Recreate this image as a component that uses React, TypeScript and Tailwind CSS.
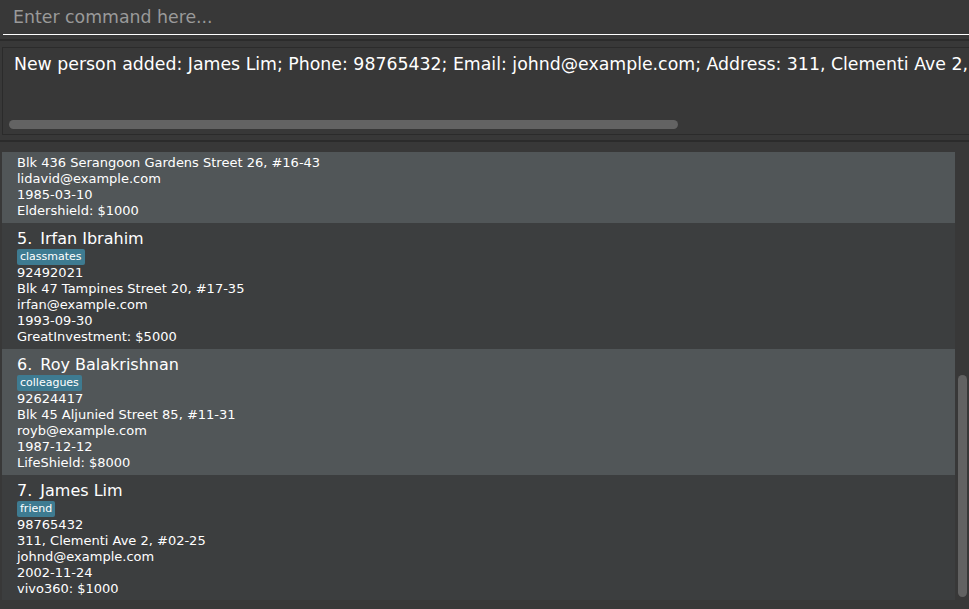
import React from "react";

type Person = {
  id: number;
  name: string;
  tag: string;
  phone: string;
  address: string;
  email: string;
  birthday: string;
  policy: string;
};

const people: Person[] = [
  {
    id: 4,
    name: "David Li",
    tag: "family",
    phone: "91031282",
    address: "Blk 436 Serangoon Gardens Street 26, #16-43",
    email: "lidavid@example.com",
    birthday: "1985-03-10",
    policy: "Eldershield: $1000",
  },
  {
    id: 5,
    name: "Irfan Ibrahim",
    tag: "classmates",
    phone: "92492021",
    address: "Blk 47 Tampines Street 20, #17-35",
    email: "irfan@example.com",
    birthday: "1993-09-30",
    policy: "GreatInvestment: $5000",
  },
  {
    id: 6,
    name: "Roy Balakrishnan",
    tag: "colleagues",
    phone: "92624417",
    address: "Blk 45 Aljunied Street 85, #11-31",
    email: "royb@example.com",
    birthday: "1987-12-12",
    policy: "LifeShield: $8000",
  },
  {
    id: 7,
    name: "James Lim",
    tag: "friend",
    phone: "98765432",
    address: "311, Clementi Ave 2, #02-25",
    email: "johnd@example.com",
    birthday: "2002-11-24",
    policy: "vivo360: $1000",
  },
];

function PersonCard({ person, first }: { person: Person; first?: boolean }) {
  const light = person.id % 2 === 0;
  return (
    <div
      className={`h-[126px] shrink-0 pl-[15px] pt-[6px] pb-[4px] ${light ? "bg-[#515658]" : "bg-[#3c3e3f]"} ${first ? "-mt-[55px]" : ""}`}
    >
      <div className="h-[20px] leading-[20px] text-[16px] whitespace-nowrap flex">
        <span>{person.id}.</span>
        <span className="ml-[8px]">{person.name}</span>
      </div>
      <div className="flex">
        <span className="h-[16px] leading-[16px] px-[3px] rounded-[2px] bg-[#3e7b91] text-[11px]">{person.tag}</span>
      </div>
      <div className="text-[13px] leading-[16px] whitespace-nowrap">
        <div>{person.phone}</div>
        <div>{person.address}</div>
        <div>{person.email}</div>
        <div>{person.birthday}</div>
        <div>{person.policy}</div>
      </div>
    </div>
  );
}

export default function App() {
  return (
    <div className="w-[969px] h-[609px] bg-[#383838] text-white flex flex-col overflow-hidden font-['DejaVu_Sans',sans-serif]">
      {/* command box */}
      <div className="h-[35px] shrink-0 pl-[3px]">
        <div className="h-full border-b border-white flex items-center pt-[2px] pl-[10px] text-[17.33px] text-[#9a9a9a]">
          Enter command here...
        </div>
      </div>
      <div className="h-[4px] shrink-0" />
      <div className="h-[2px] shrink-0 bg-[#2b2b2b]" />

      {/* result display */}
      <div className="pt-[6px] pl-[2px] shrink-0">
        <div className="h-[88px] w-[980px] border border-[#2b2b2b] flex flex-col overflow-hidden">
          <div className="pt-[5px] pl-[11px] h-[22px] leading-[22px] box-content text-[17.33px] whitespace-nowrap">
            New person added: James Lim; Phone: 98765432; Email: johnd@example.com; Address: 311, Clementi Ave 2, #02-25; Birthday: 2002-11-24; Tags: [friend]
          </div>
          <div className="mt-auto mb-[5px] ml-[6px] w-[669px] h-[9px] rounded-full bg-[#636363]" />
        </div>
      </div>
      <div className="h-[5px] shrink-0" />
      <div className="h-[2px] shrink-0 bg-[#2b2b2b]" />
      <div className="h-[10px] shrink-0" />

      {/* person list */}
      <div className="h-[448px] shrink-0 flex pl-[2px]">
        <div className="w-[953px] flex flex-col overflow-hidden">
          {people.map((p, i) => (
            <PersonCard key={p.id} person={p} first={i === 0} />
          ))}
        </div>
        <div className="w-[14px] pl-[3px] pt-[223px]">
          <div className="w-[9px] h-[222px] rounded-full bg-[#626262]" />
        </div>
      </div>
    </div>
  );
}
